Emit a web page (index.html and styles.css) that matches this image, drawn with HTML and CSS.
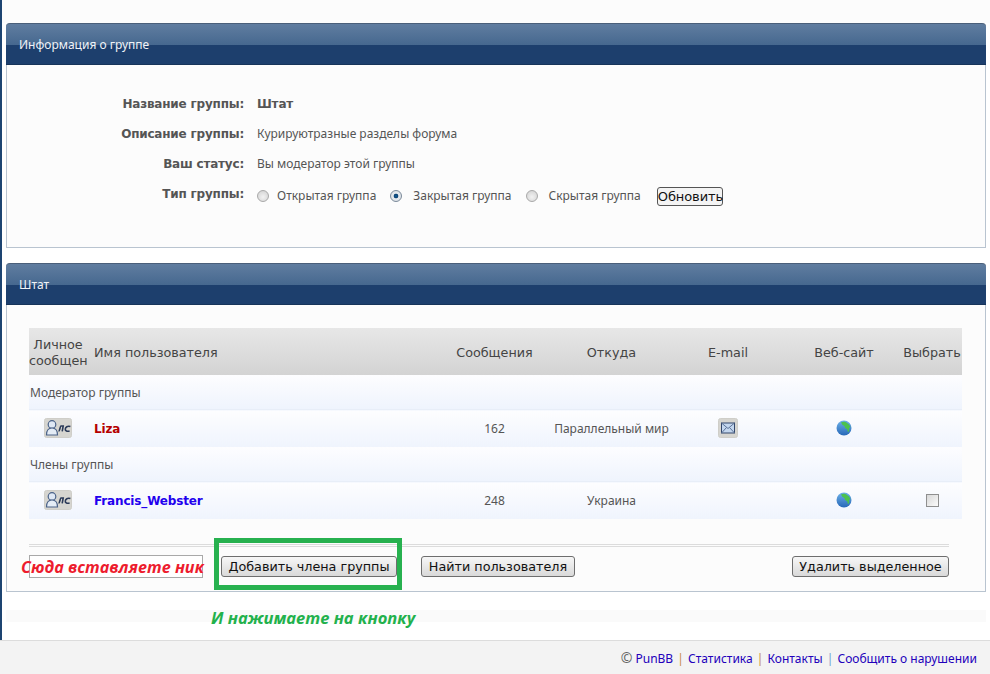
FILE: index.html
```html
<!DOCTYPE html>
<html lang="ru">
<head>
    <meta charset="UTF-8">
    <meta name="viewport" content="width=device-width, initial-scale=1.0">
    <title>Информация о группе</title>
    <link rel="stylesheet" href="styles.css">
</head>
<body>
    <svg class="defs" width="0" height="0">
        <defs>
            <linearGradient id="globe-fill" x1="0" y1="0" x2="0" y2="1">
                <stop offset="0" stop-color="#6cb0e8"/>
                <stop offset="1" stop-color="#2768b8"/>
            </linearGradient>
        </defs>
        <symbol id="pm" viewBox="0 0 28 20">
            <rect x="0.5" y="0.5" width="27" height="19" rx="2" fill="#d6d5d0" stroke="#cfcec9"/>
            <circle cx="8" cy="6.500" r="3.800" fill="#dfe8f4" stroke="#4a6288" stroke-width="1.200"/>
            <path d="M2.500 17c0-4.500 2.300-7 5.500-7s5.500 2.500 5.500 7z" fill="#e4ecf6" stroke="#4a6288" stroke-width="1.200"/>
            <path d="M14.600 13.200c1.300-.2 1.300-4.400 2.300-5.200h2.300l-1 5.400M26.400 8.600c-3-1-4.900.4-5.100 2.400-.2 2 1.800 2.600 4.300 1.900" fill="none" stroke="#2b3a58" stroke-width="1.600"/>
        </symbol>
        <symbol id="mail" viewBox="0 0 20 20">
            <rect x="0.5" y="0.5" width="19" height="19" rx="2" fill="#d6d5d0" stroke="#cfcec9"/>
            <rect x="3.500" y="5" width="13" height="10" fill="#c3d6ee" stroke="#33476b"/>
            <path d="M3.500 5l6.500 5.500L16.500 5M3.500 15l5-5.500M16.500 15l-5-5.500" fill="none" stroke="#5c7398"/>
        </symbol>
        <symbol id="globe" viewBox="0 0 16 16">
            <circle cx="8" cy="8" r="7.500" fill="url(#globe-fill)"/>
            <path d="M5 2.500c1.500-.8 3.500-.9 5-.3l3 2.300 1.500 2.500-1.500 1 .3 2.500-1.300 2-.8-3.300-2.200-1.200-.5-2-2-1z" fill="#4cc24e"/>
        </symbol>
    </svg>

    <div class="page">
        <div class="panel panel-info">
            <h2 class="panel-head">Информация о группе</h2>
            <div class="info-grid">
                <b class="info-label">Название группы:</b>
                <b class="info-value">Штат</b>
                <b class="info-label">Описание группы:</b>
                <span class="info-value">Курируютразные разделы форума</span>
                <b class="info-label">Ваш статус:</b>
                <span class="info-value">Вы модератор этой группы</span>
                <b class="info-label info-label-type">Тип группы:</b>
                <div class="type-row">
                    <label class="type-opt"><input type="radio" name="type">Открытая группа</label>
                    <label class="type-opt"><input type="radio" name="type" checked>Закрытая группа</label>
                    <label class="type-opt"><input type="radio" name="type">Скрытая группа</label>
                    <button class="btn-plain">Обновить</button>
                </div>
            </div>
        </div>

        <div class="panel panel-members">
            <h2 class="panel-head">Штат</h2>
            <table class="members">
                <colgroup>
                    <col class="c-pm"><col class="c-name"><col class="c-num"><col class="c-num"><col class="c-mail"><col class="c-mail"><col class="c-sel">
                </colgroup>
                <thead>
                    <tr>
                        <th><div class="th-clip">Личное сообщение</div></th>
                        <th class="left">Имя пользователя</th>
                        <th>Сообщения</th>
                        <th>Откуда</th>
                        <th>E-mail</th>
                        <th>Веб-сайт</th>
                        <th>Выбрать</th>
                    </tr>
                </thead>
                <tbody>
                    <tr class="group-row"><td colspan="7">Модератор группы</td></tr>
                    <tr class="user-row">
                        <td><svg class="ic-pm"><use href="#pm"/></svg></td>
                        <td class="left"><a class="user mod" href="#">Liza</a></td>
                        <td>162</td>
                        <td>Параллельный мир</td>
                        <td><svg class="ic-mail"><use href="#mail"/></svg></td>
                        <td><svg class="ic-globe"><use href="#globe"/></svg></td>
                        <td></td>
                    </tr>
                    <tr class="group-row"><td colspan="7">Члены группы</td></tr>
                    <tr class="user-row">
                        <td><svg class="ic-pm"><use href="#pm"/></svg></td>
                        <td class="left"><a class="user member" href="#">Francis_Webster</a></td>
                        <td>248</td>
                        <td>Украина</td>
                        <td></td>
                        <td><svg class="ic-globe"><use href="#globe"/></svg></td>
                        <td><input class="pick" type="checkbox"></td>
                    </tr>
                </tbody>
            </table>
            <div class="rule"></div>
            <div class="actions">
                <input class="nick" type="text">
                <button class="btn btn-add">Добавить члена группы</button>
                <button class="btn btn-find">Найти пользователя</button>
                <button class="btn btn-del">Удалить выделенное</button>
                <span class="note-red">Сюда вставляете ник</span>
                <span class="note-box"></span>
            </div>
        </div>

        <div class="band"><span class="note-green">И нажимаете на кнопку</span></div>
    </div>

    <div class="footer">
        <span class="copy">©</span> <a href="#">PunBB</a>
        <span class="sep">|</span> <a href="#">Статистика</a>
        <span class="sep">|</span> <a href="#">Контакты</a>
        <span class="sep sep-blue">|</span> <a href="#">Сообщить о нарушении</a>
    </div>
</body>
</html>
```

FILE: styles.css
```css
html, body {
    margin: 0;
    padding: 0;
    height: 674px;
    overflow: hidden;
}
body {
    font-family: "Noto Sans", Tahoma, sans-serif;
    font-size: 12px;
    color: #555;
    background: #fff;
}
b {
    font-family: "DejaVu Sans", Verdana, sans-serif;
    letter-spacing: -0.2px;
}
.defs {
    position: absolute;
}
.page {
    height: 640px;
    box-sizing: border-box;
    padding: 23px 4px 0 4px;
    border-left: 2px solid #1d4471;
    background: linear-gradient(to bottom, #fcfcfc 23px, #fff 23px);
}
.panel {
    background: #fcfcfc;
    border: 1px solid #b9c4d0;
    border-top: none;
    border-radius: 4px 4px 0 0;
    box-sizing: border-box;
}
.panel-info {
    height: 225px;
}
.panel-members {
    height: 329px;
    margin-top: 15px;
}
.panel-head {
    margin: 0 -1px;
    height: 42px;
    box-sizing: border-box;
    padding: 13px 0 0 13px;
    font-size: 12px;
    font-weight: normal;
    line-height: 15px;
    color: #f0f3f7;
    border-radius: 4px 4px 0 0;
    border-top: 1px solid #4a5f7a;
    border-bottom: 1px solid #17345a;
    background: linear-gradient(to bottom, #607da0 0, #46688f 52%, #1d3f6d 52%, #1d3f6d 100%);
}
.info-grid {
    display: grid;
    grid-template-columns: 237px 1fr;
    column-gap: 13px;
    grid-auto-rows: 30px;
    padding-top: 24px;
    line-height: 30px;
}
.info-label {
    text-align: right;
}
.type-row {
    display: flex;
    align-items: center;
    height: 34px;
}
.type-opt {
    display: flex;
    align-items: center;
    margin-right: 14px;
}
.type-opt input {
    appearance: none;
    width: 12px;
    height: 12px;
    margin: 0 8px 0 0;
    border-radius: 50%;
    border: 1px solid #a9a9a9;
    background: radial-gradient(circle at 50% 60%, #f2f2f2, #cfcfcf);
}
.type-opt + .type-opt input {
    margin-right: 11px;
}
.type-opt input:checked {
    border-color: #7b8a9a;
    background: radial-gradient(circle, #0f5f9a 0, #0b3f70 28%, #e6eaee 38%, #d8dde2 100%);
}
.btn-plain {
    width: 66px;
    height: 19px;
    padding: 0;
    margin-left: 2px;
    font: 13px "DejaVu Sans", sans-serif;
    letter-spacing: -0.1px;
    color: #111;
    background: #f4f4f4;
    border: 1px solid #555;
    border-radius: 3px;
}
.members {
    width: 933px;
    margin: 23px 0 0 22px;
    border-collapse: collapse;
    table-layout: fixed;
}
.c-pm { width: 58px; }
.c-name { width: 349px; }
.c-num { width: 117px; }
.c-mail { width: 116px; }
.c-sel { width: 60px; }
.members th {
    height: 47px;
    padding: 1px 0 0;
    box-sizing: border-box;
    font: 12.75px "DejaVu Sans", Verdana, sans-serif;
    color: #444;
    text-align: center;
    background: linear-gradient(to bottom, #e7e7e7, #d3d3d3);
}
.members .left {
    text-align: left;
    padding-left: 7px;
}
.th-clip {
    overflow: hidden;
    margin-top: 1px;
    line-height: 16px;
}
.members td {
    padding: 0;
    text-align: center;
    background: linear-gradient(to bottom, #fdfdff, #eff4fd);
}
.group-row td {
    height: 34px;
    padding-left: 1px;
    text-align: left;
    border-bottom: 1px solid #e8eef8;
}
.user-row td {
    height: 37px;
    white-space: nowrap;
}
.user {
    font-family: "DejaVu Sans", Verdana, sans-serif;
    font-weight: bold;
    letter-spacing: -0.15px;
    text-decoration: none;
}
.mod { color: #b50000; }
.member { color: #2200ee; }
.ic-pm, .ic-mail, .ic-globe {
    display: inline-block;
    margin-bottom: 2px;
    vertical-align: middle;
}
.ic-pm {
    width: 28px;
    height: 20px;
}
.ic-mail {
    width: 20px;
    height: 20px;
}
.ic-globe {
    width: 16px;
    height: 16px;
}
.pick {
    appearance: none;
    display: inline-block;
    width: 13px;
    height: 13px;
    margin: 0 0 2px;
    vertical-align: middle;
    border: 1px solid #8f8f8f;
    background: linear-gradient(135deg, #d8d8d8, #fbfbfb);
}
.rule {
    height: 1px;
    margin: 25px 36px 0 22px;
    border-top: 1px solid #dcdcdc;
    border-bottom: 1px solid #dcdcdc;
}
.actions {
    position: relative;
    display: flex;
    align-items: center;
    margin-top: 8px;
    padding: 0 36px 0 22px;
}
.nick {
    width: 174px;
    height: 23px;
    box-sizing: border-box;
    margin-right: 18px;
    padding: 0;
    border: 1px solid #a9a9a9;
    background: #fff;
}
.btn {
    height: 21px;
    padding: 0;
    font: 12.75px "DejaVu Sans", sans-serif;
    color: #111;
    border: 1px solid #6e6e6e;
    border-radius: 3px;
    background: linear-gradient(to bottom, #f7f7f7, #d9d9d9);
}
.btn-add { width: 176px; }
.btn-find { width: 154px; margin-left: 24px; }
.btn-del { width: 157px; margin-left: auto; }
.note-red {
    position: absolute;
    left: 14px;
    top: 1px;
    font: italic bold 16.2px/23px "Open Sans", sans-serif;
    color: #ed1c2e;
    white-space: nowrap;
}
.note-box {
    position: absolute;
    left: 207px;
    top: -17px;
    width: 188px;
    height: 52px;
    box-sizing: border-box;
    border: 5px solid #27b14f;
}
.band {
    position: relative;
    height: 12px;
    margin-top: 18px;
    background: #fafafa;
}
.note-green {
    position: absolute;
    left: 205px;
    top: -2px;
    font: italic bold 16.5px/20px "Open Sans", sans-serif;
    color: #22b14c;
    white-space: nowrap;
}
.footer {
    height: 34px;
    box-sizing: border-box;
    padding: 8px 13px 0 0;
    text-align: right;
    line-height: 18px;
    background: #f3f3f3;
    border-top: 1px solid #dcdcdc;
    color: #666;
}
.footer a {
    color: #2200bb;
    text-decoration: none;
}
.copy {
    font-size: 14px;
}
.sep {
    color: #c68a45;
    margin: 0 1px;
}
.sep-blue {
    color: #6f9fd0;
}
```
